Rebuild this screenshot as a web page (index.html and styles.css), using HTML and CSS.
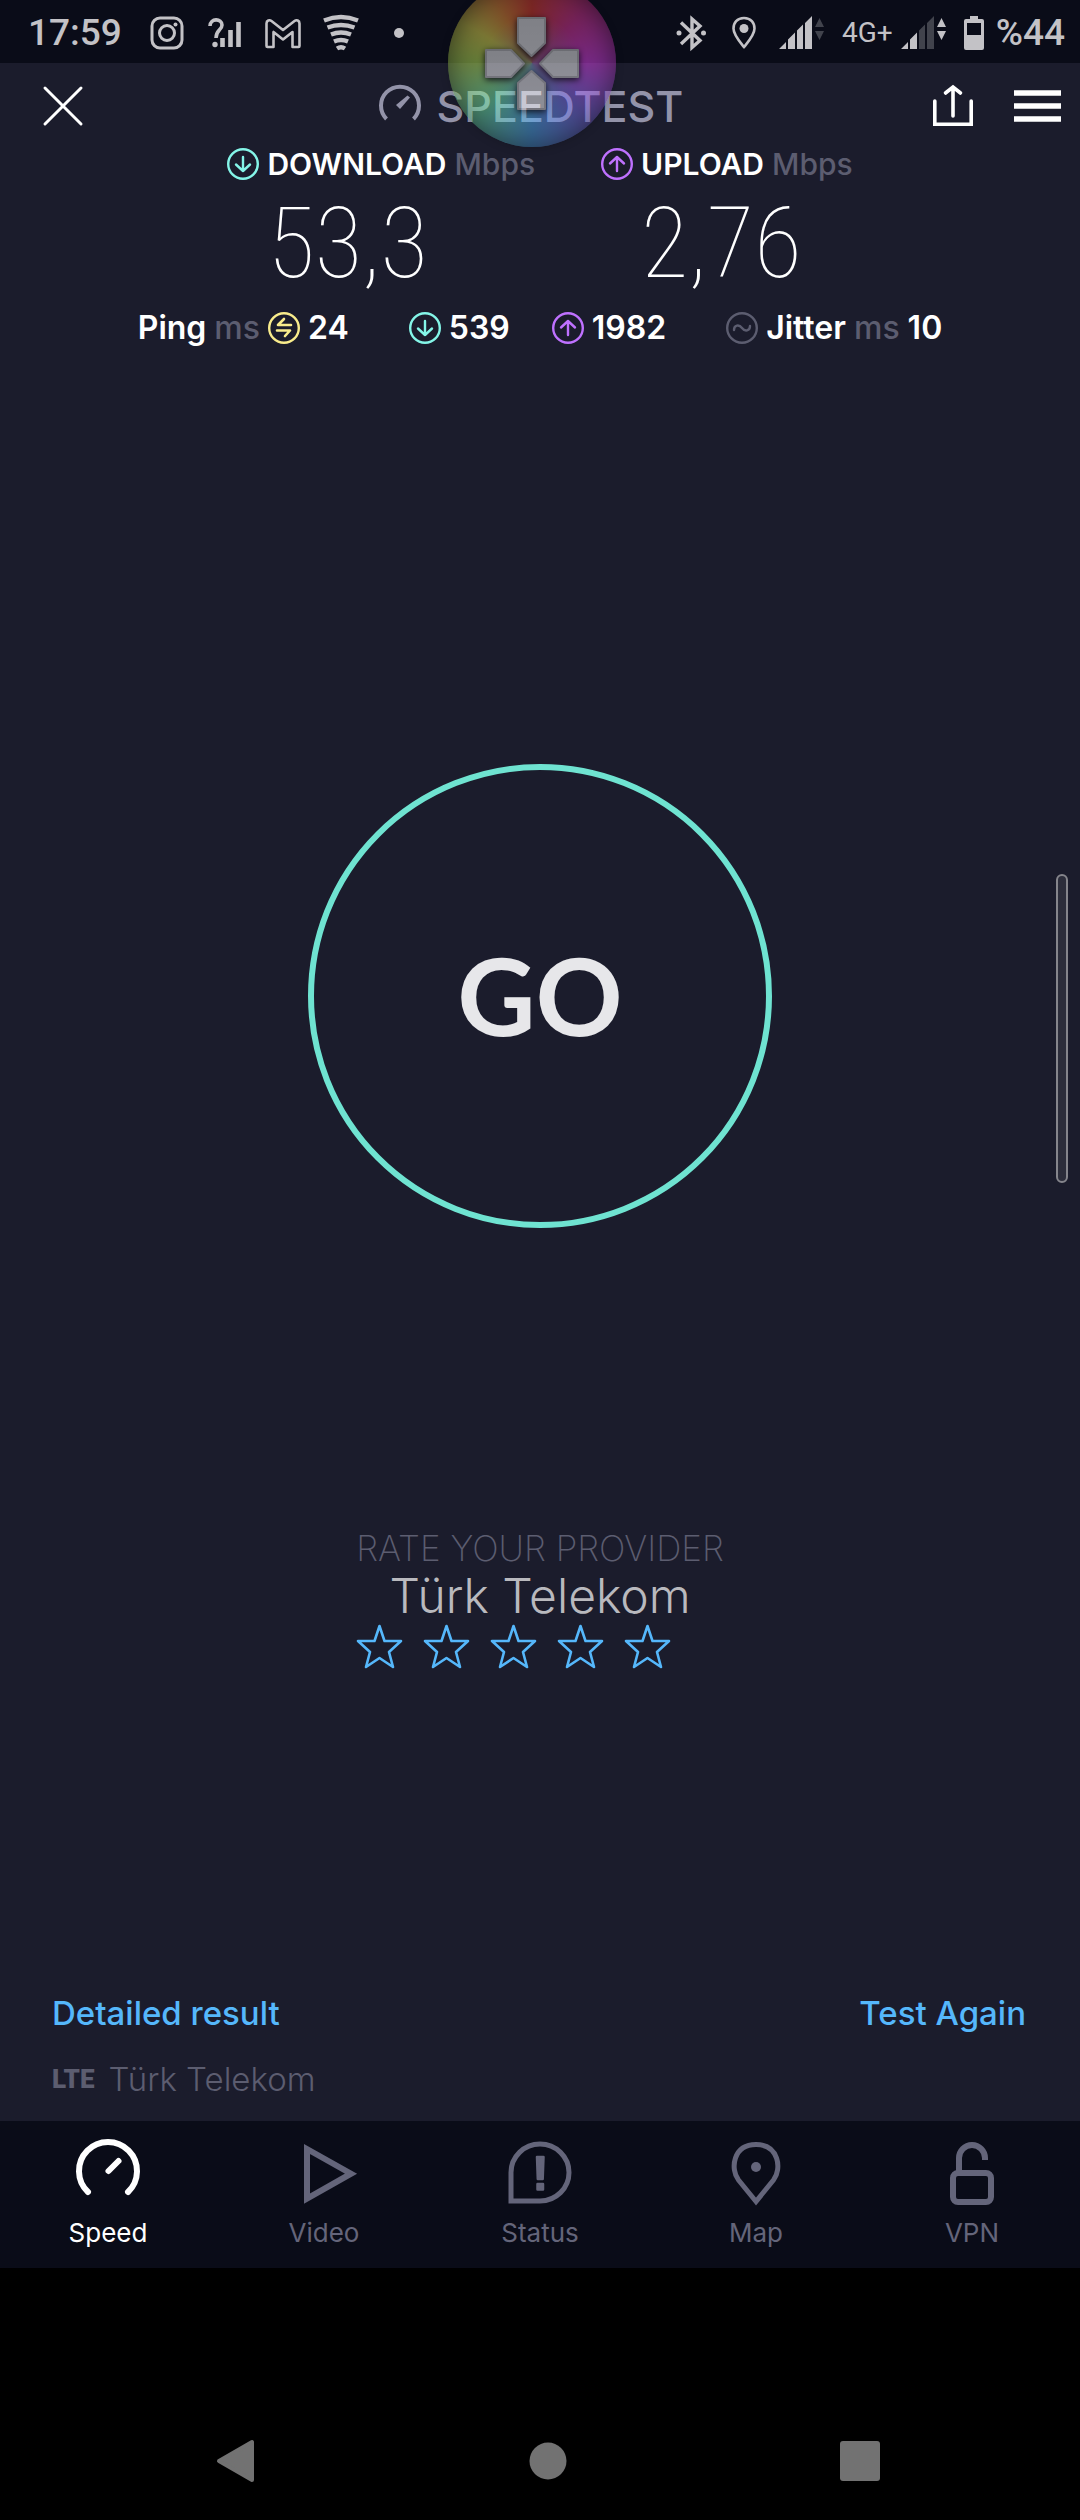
FILE: index.html
```html
<!DOCTYPE html>
<html lang="en">
<head>
<meta charset="utf-8">
<meta name="viewport" content="width=device-width, initial-scale=1">
<title>Speedtest</title>
<link rel="stylesheet" href="styles.css">
</head>
<body>
<div class="statusbar">
  <div class="status-left">
    <span class="clock">17:59</span>
    <svg width="36" height="36" viewBox="0 0 36 36" fill="none" stroke="currentColor" stroke-width="3"><rect x="3" y="3" width="30" height="30" rx="8"/><circle cx="18" cy="18" r="7.500"/><circle cx="26.500" cy="9.500" r="2" fill="currentColor" stroke="none"/></svg>
    <svg width="36" height="36" viewBox="0 0 36 36" fill="none" stroke="currentColor" stroke-width="3.600"><path d="M3 11c0-8 12-8 12-1 0 5-6 5-6 13"/><circle cx="8" cy="29.500" r="2.700" fill="currentColor" stroke="none"/><path d="M15.500 32V23M23.500 32V15M31.500 32V7" stroke-width="4.600"/></svg>
    <svg width="36" height="36" viewBox="0 0 36 36" fill="none" stroke="currentColor" stroke-width="2.600" stroke-linejoin="round"><path d="M1.500 31V8.500c0-3 3-4 5-2.500L18 15 29.500 6c2-1.500 5-.5 5 2.500V31c0 .6-.4 1-1 1h-6V17L18 24.500 8.500 17v15h-6c-.6 0-1-.4-1-1z"/></svg>
    <svg width="36" height="36" viewBox="0 0 36 36" fill="none" stroke="currentColor" stroke-width="4.400"><path d="M1 5.500Q18-1.500 35 5.500M4.500 12.500Q18 7.500 31.500 12.500M8 19.500Q18 15.500 28 19.500M11 26.500Q18 23.500 25 26.500M14 33.500Q18 31 22 33.500"/></svg>
    <svg width="36" height="36" viewBox="0 0 36 36"><circle cx="18" cy="18" r="5" fill="currentColor"/></svg>
  </div>
  <div class="status-right">
    <svg width="36" height="36" viewBox="0 0 36 36" fill="none" stroke="currentColor" stroke-width="3.400"><path d="M8 7.500l19 18-8 7V4l8 7-19 18"/><circle cx="6" cy="18" r="2.500" fill="currentColor" stroke="none"/><circle cx="30.500" cy="18" r="2.500" fill="currentColor" stroke="none"/></svg>
    <svg width="36" height="36" viewBox="0 0 36 36"><path d="M18 3C11 3 7.500 8 7.500 13.500 7.500 20 14 27 18 32c4-5 10.500-12 10.500-18.500C28.500 8 25 3 18 3z" fill="none" stroke="currentColor" stroke-width="2.600"/><circle cx="18" cy="13.500" r="4.500" fill="currentColor"/></svg>
    <svg width="46" height="36" viewBox="0 0 46 36" fill="currentColor"><path d="M0 34l7-7v7zM9 34V24.500l7-7V34zM18 34V15.500l6-6V34zM26 34V8l7-7v33z"/><path class="dim" d="M36 12l4.500-9 4.500 9zM36 16h9l-4.500 9z"/></svg>
    <div class="network">
      <span class="network-type">4G+</span>
      <svg width="46" height="36" viewBox="0 0 46 36" fill="currentColor"><path d="M0 34l7-7v7zM9 34V24.500l7-7V34zM36 12l4.500-9 4.500 9zM36 16h9l-4.500 9z"/><path class="dim" d="M18 34V15.500l6-6V34zM26 34V8l7-7v33z"/></svg>
    </div>
    <div class="battery">
      <svg width="20" height="36" viewBox="0 0 20 36"><path d="M6 1h8v3h4a2 2 0 0 1 2 2v27a2 2 0 0 1-2 2H2a2 2 0 0 1-2-2V6a2 2 0 0 1 2-2h4zM3 8v12h14V8z" fill="currentColor" fill-rule="evenodd"/></svg>
      <span class="clock">%44</span>
    </div>
  </div>
</div>

<main class="app">
  <header class="topbar">
    <button class="icon-button" aria-label="Close"><svg width="42" height="42" viewBox="0 0 42 42" stroke="currentColor" stroke-width="3" stroke-linecap="round"><path d="M3 3l36 36M39 3L3 39"/></svg></button>
    <h1 class="brand"><svg width="42" height="42" viewBox="0 0 42 42" fill="none" stroke="currentColor"><path d="M7.500 34a19 19 0 1 1 27 0" stroke-width="4"/><path d="M17 20L28.500 10.500l2.500 2L21 24z" fill="currentColor" stroke="none"/></svg>SPEEDTEST</h1>
    <div class="actions">
      <button class="icon-button" aria-label="Share"><svg width="42" height="42" viewBox="0 0 42 42" fill="none" stroke="currentColor" stroke-width="3.600" stroke-linecap="round"><path d="M2.800 16v23.200h36.400V16M21 31V3M13.500 8L21 2l7.500 6"/></svg></button>
      <button class="icon-button" aria-label="Menu"><svg width="48" height="42" viewBox="0 0 48 42" stroke="currentColor" stroke-width="5.500"><path d="M0 8h47M0 21h47M0 34h47"/></svg></button>
    </div>
  </header>

  <section class="results" aria-label="Results">
    <div class="result">
      <h2 class="result-head"><svg class="down" width="32" height="32" viewBox="0 0 32 32"><use href="#arrow-down"/></svg>DOWNLOAD <span class="unit">Mbps</span></h2>
      <p class="result-value">53,3</p>
    </div>
    <div class="result">
      <h2 class="result-head"><svg class="up" width="32" height="32" viewBox="0 0 32 32"><use href="#arrow-up"/></svg>UPLOAD <span class="unit">Mbps</span></h2>
      <p class="result-value">2,76</p>
    </div>
  </section>

  <section class="latency" aria-label="Latency">
    <p class="metric">Ping <span class="unit">ms</span><svg class="idle" width="32" height="32" viewBox="0 0 32 32" fill="none" stroke="currentColor" stroke-linecap="round" stroke-linejoin="round"><circle cx="16" cy="16" r="14.800" stroke-width="2.400"/><path d="M23 13H10l6-6M9 18.500h13l-5 5.500" stroke-width="2.600"/></svg>24</p>
    <div class="loaded">
      <p class="metric"><svg class="down" width="32" height="32" viewBox="0 0 32 32"><use href="#arrow-down"/></svg>539</p>
      <p class="metric"><svg class="up" width="32" height="32" viewBox="0 0 32 32"><use href="#arrow-up"/></svg>1982</p>
    </div>
    <p class="metric"><svg class="unit" width="32" height="32" viewBox="0 0 32 32" fill="none" stroke="currentColor" stroke-width="2.400" stroke-linecap="round"><circle cx="16" cy="16" r="14.800"/><path d="M8 18c0-5 5-6 8-2s8 3 8-2"/></svg>Jitter <span class="unit">ms</span> 10</p>
  </section>

  <button class="go">GO</button>

  <section class="provider">
    <h2 class="provider-title">RATE YOUR PROVIDER</h2>
    <p class="provider-name">Türk Telekom</p>
    <div class="stars">
      <button class="star" aria-label="1 star"><svg width="47" height="45" viewBox="0 0 47 45"><use href="#star"/></svg></button>
      <button class="star" aria-label="2 stars"><svg width="47" height="45" viewBox="0 0 47 45"><use href="#star"/></svg></button>
      <button class="star" aria-label="3 stars"><svg width="47" height="45" viewBox="0 0 47 45"><use href="#star"/></svg></button>
      <button class="star" aria-label="4 stars"><svg width="47" height="45" viewBox="0 0 47 45"><use href="#star"/></svg></button>
      <button class="star" aria-label="5 stars"><svg width="47" height="45" viewBox="0 0 47 45"><use href="#star"/></svg></button>
    </div>
  </section>

  <footer class="footer">
    <div class="links"><a href="#result">Detailed result</a><a href="#test">Test Again</a></div>
    <p class="carrier"><span class="lte">LTE</span>Türk Telekom</p>
  </footer>
</main>

<nav class="tabs" aria-label="Main">
  <a class="tab active" href="#speed"><svg width="64" height="64" viewBox="0 0 64 64" fill="none" stroke="currentColor" stroke-width="6" stroke-linecap="round"><path d="M12 53a29 29 0 1 1 40 0M32.500 32l10-10"/></svg>Speed</a>
  <a class="tab" href="#video"><svg width="64" height="64" viewBox="0 0 64 64" fill="none" stroke="currentColor" stroke-width="6"><path d="M15 10v49.500L59 34.700z"/></svg>Video</a>
  <a class="tab" href="#status"><svg width="64" height="64" viewBox="0 0 64 64"><path d="M3 62V33.500a29 28.500 0 1 1 29 28.500z" fill="none" stroke="currentColor" stroke-width="5"/><path d="M29 18h6.500l-.8 22h-4.900zM29.500 45h5.500v5.500h-5.500z" fill="currentColor" stroke="currentColor" stroke-width="2.500" stroke-linejoin="round"/></svg>Status</a>
  <a class="tab" href="#map"><svg width="64" height="64" viewBox="0 0 64 64"><path d="M32 62.500L14.500 41C6 30 9 5.500 32 5.500S58 30 49.500 41z" fill="none" stroke="currentColor" stroke-width="5"/><circle cx="32" cy="28" r="5" fill="currentColor"/></svg>Map</a>
  <a class="tab" href="#vpn"><svg width="64" height="64" viewBox="0 0 64 64" fill="none" stroke="currentColor" stroke-width="6"><rect x="13" y="34" width="38" height="29" rx="5"/><path d="M19 34V19a13 13 0 0 1 26 0V21"/></svg>VPN</a>
</nav>

<div class="system-nav">
  <button aria-label="Back"><svg width="40" height="44" viewBox="0 0 40 44"><path d="M3 22L36 3v38z" fill="currentColor" stroke="currentColor" stroke-width="4" stroke-linejoin="round"/></svg></button>
  <button aria-label="Home"><svg width="40" height="44" viewBox="0 0 40 44"><circle cx="20" cy="22" r="18.500" fill="currentColor"/></svg></button>
  <button aria-label="Recent apps"><svg width="40" height="44" viewBox="0 0 40 44"><rect y="2" width="40" height="40" rx="3" fill="currentColor"/></svg></button>
</div>

<button class="game-orb" aria-label="Game tools"><svg width="168" height="168" viewBox="0 0 168 168"><defs><linearGradient id="pad" x1="0" y1="0" x2="0" y2="1"><stop offset="0" stop-color="#f4f4f4"/><stop offset="1" stop-color="#fff"/></linearGradient></defs><g class="pads" fill="url(#pad)" stroke="#ccc" stroke-width="2" stroke-linejoin="round"><path d="M70 39h27v25L83.500 77 70 64z"/><path d="M38 71h25l13 13.500L63 98H38z"/><path d="M130 71h-25L92 84.500 105 98h25z"/><path d="M70 130h27v-26L83.500 92 70 104z"/></g></svg></button>
<div class="edge-handle"></div>

<svg class="sprite" aria-hidden="true">
  <symbol id="arrow-down" viewBox="0 0 32 32"><g fill="none" stroke="currentColor" stroke-width="2.400" stroke-linecap="round" stroke-linejoin="round"><circle cx="16" cy="16" r="14.800"/><path d="M16 9v14M9 16.500l7 6.500 7-6.500"/></g></symbol>
  <symbol id="arrow-up" viewBox="0 0 32 32"><g fill="none" stroke="currentColor" stroke-width="2.400" stroke-linecap="round" stroke-linejoin="round"><circle cx="16" cy="16" r="14.800"/><path d="M16 23V9M9 15.500L16 9l7 6.500"/></g></symbol>
  <symbol id="star" viewBox="0 0 47 45"><path d="M23.500 2l5 15H45L33 28l4 15-13.500-9L10 43l4-15L2 17h16.500z" fill="none" stroke="currentColor" stroke-width="2.600" stroke-linejoin="round"/></symbol>
</svg>
</body>
</html>
```
FILE: styles.css
```css
:root {
  --bg: #1b1c2c;
  --bar: #0a0c18;
  --muted: #5c5d70;
  --blue: #55b7fb;
  --status: #c3c2c6;
}

* { box-sizing: border-box; }

body {
  margin: 0;
  min-height: 100vh;
  display: flex;
  flex-direction: column;
  position: relative;
  background: #000;
  color: #fff;
  font-family: Inter, "Open Sans", sans-serif;
}

h1, h2, p { margin: 0; font-weight: 400; }
svg { display: block; flex: none; overflow: visible; }
a { text-decoration: none; }

button {
  padding: 0;
  border: 0;
  background: none;
  color: inherit;
  font: inherit;
  cursor: pointer;
}

.sprite { position: absolute; width: 0; height: 0; }

/* Status bar */
.statusbar {
  display: flex;
  justify-content: space-between;
  padding: 15px 15px 12px 28px;
  background: var(--bar);
  color: var(--status);
  font-family: Roboto, sans-serif;
}
.status-left, .status-right, .network, .battery { display: flex; align-items: center; }
.status-left { gap: 22px; }
.status-left .clock { margin-right: 5px; }
.status-right { gap: 17px; }
.network { gap: 8px; }
.battery { gap: 12px; }
.clock { font-size: 37px; line-height: 36px; font-weight: 500; }
.network-type { font-size: 28px; line-height: 36px; }
.dim { opacity: 0.3; }

/* App */
.app {
  flex: 1;
  display: flex;
  flex-direction: column;
  background: var(--bg);
}

.topbar {
  display: grid;
  grid-template-columns: 1fr auto 1fr;
  align-items: center;
  height: 85px;
  padding: 0 18px 0 42px;
}
.topbar > .icon-button { justify-self: start; }
.brand {
  display: flex;
  align-items: center;
  gap: 16px;
  padding-right: 42px;
  font-size: 43px;
  line-height: 42px;
  font-weight: 500;
  color: #9393a9;
}
.actions { display: flex; gap: 40px; justify-self: end; }

.results { display: flex; justify-content: center; gap: 66px; }
.result-head {
  display: flex;
  align-items: center;
  gap: 8px;
  font-size: 30px;
  line-height: 32px;
  font-weight: 600;
}
.unit { color: var(--muted); font-weight: 500; }
.down { color: #84f5e8; }
.up { color: #bf71ff; }
.idle { color: #f9ec8c; }
.result-value {
  padding: 14px 0 18px 40px;
  font-family: "Roboto Condensed", "Open Sans Condensed", "Noto Sans Condensed", Roboto, sans-serif;
  font-size: 98px;
  line-height: 100px;
  font-weight: 100;
}

.latency { display: flex; justify-content: center; gap: 60px; }
.loaded { display: flex; gap: 42px; }
.metric {
  display: flex;
  align-items: center;
  gap: 8px;
  font-size: 32px;
  line-height: 32px;
  font-weight: 600;
}

.go {
  align-self: center;
  width: 464px;
  height: 464px;
  margin: 420px 0 300px;
  padding-bottom: 4px;
  border: 6px solid #6fe3d1;
  border-radius: 50%;
  color: #e7e7ea;
  font-family: Lato, sans-serif;
  font-size: 108px;
  font-weight: 700;
}

.provider { align-self: center; text-align: center; }
.provider-title { font-size: 35px; line-height: 40px; font-weight: 200; color: var(--muted); }
.provider-name { font-size: 48px; line-height: 56px; font-weight: 300; color: #b9b9be; }
.stars { display: flex; gap: 20px; color: var(--blue); }

.footer { margin-top: auto; padding: 0 54px 22px 52px; }
.links {
  display: flex;
  justify-content: space-between;
  padding-bottom: 26px;
  font-size: 33px;
  line-height: 40px;
  font-weight: 500;
}
.links a { color: var(--blue); }
.carrier {
  display: flex;
  gap: 14px;
  font-size: 33px;
  line-height: 40px;
  font-weight: 300;
  color: var(--muted);
}
.lte { font-family: Roboto, sans-serif; font-size: 26px; font-weight: 900; }

/* Tabs */
.tabs {
  display: grid;
  grid-template-columns: repeat(5, 1fr);
  padding: 18px 0 19px;
  background: var(--bar);
}
.tab {
  display: flex;
  flex-direction: column;
  align-items: center;
  gap: 14px;
  color: #64657a;
  font-size: 26px;
  line-height: 32px;
}
.tab.active { color: #fff; }

.system-nav {
  display: flex;
  justify-content: space-between;
  padding: 171px 18.5% 37px 20%;
  color: #727272;
}

/* Overlays that float above the app */
.game-orb {
  position: absolute;
  top: -21px;
  left: calc(50% - 92px);
  width: 168px;
  height: 168px;
  border-radius: 50%;
  background:
    radial-gradient(circle, rgba(160, 150, 160, 0.6) 0, rgba(160, 150, 160, 0) 40%),
    conic-gradient(#e8402f, #e0389a 45deg, #e046f0 90deg, #8070f0 135deg, #50b0f8 180deg, #70f0b0 225deg, #b8e858 270deg, #e8e050 300deg, #f09038 330deg, #e8402f);
  box-shadow: inset 0 0 28px rgba(0, 0, 0, 0.6), 0 2px 8px rgba(0, 0, 0, 0.3);
  opacity: 0.5;
}
.pads { filter: drop-shadow(0 2px 3px rgba(0, 0, 0, 0.9)); }

.edge-handle {
  position: absolute;
  top: 874px;
  right: 12px;
  width: 12px;
  height: 309px;
  border: 2px solid #85858c;
  border-radius: 6px;
  background: #2c2d3b;
}
```
